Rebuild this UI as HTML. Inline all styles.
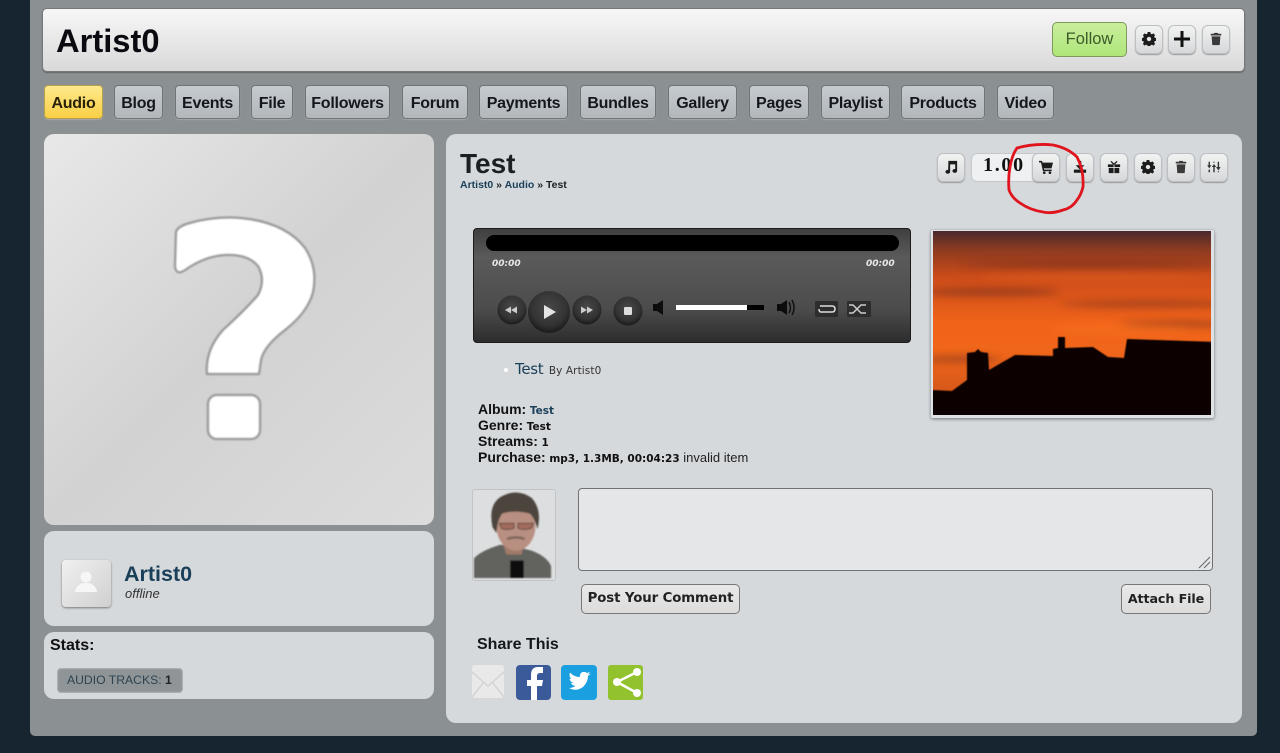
<!DOCTYPE html>
<html><head><meta charset="utf-8"><style>
*{box-sizing:border-box}
html,body{margin:0;padding:0}
body{width:1280px;height:753px;overflow:hidden;position:relative;background:#16252f;font-family:"Liberation Sans",sans-serif;color:#111}
.a{position:absolute}
.t{position:absolute;white-space:nowrap;line-height:1}
.tab{position:absolute;top:85px;height:34px;border:1px solid #6f7476;border-radius:4px;background:linear-gradient(#c6cbcf,#b2b7bb);font:bold 16px/35px "Liberation Sans",sans-serif;letter-spacing:-.25px;text-align:center;color:#14181c;box-shadow:0 1px 1px #a5a9ab}
.ib{position:absolute;width:28px;height:29px;border:1px solid #bcc0c2;border-radius:6px;background:linear-gradient(#f2f2f2,#d6d8da);box-shadow:0 1px 1px #999}
.ib svg{position:absolute;left:6px;top:6px;width:14px;height:14px;fill:#1c1c1c}
.panel{position:absolute;background:#d5d9dc;border-radius:10px}
.btn{position:absolute;border:1px solid #777;border-radius:5px;background:linear-gradient(#e9e9e9,#dcdcdc);font:bold 13.3px/28px "DejaVu Sans",sans-serif;text-align:center;color:#222;white-space:nowrap;letter-spacing:-.1px}
.lnk{color:#1a3f58}
.m{position:absolute;left:478px;height:16px;font:13px/16px "Liberation Sans",sans-serif;color:#222;white-space:nowrap}
.m b{font-size:14px;color:#111}
.m i{font:bold 10.5px/16px "DejaVu Sans",sans-serif;color:#111}
</style></head><body>
<div class="a" style="left:30px;top:0;width:1227px;height:736px;background:#8b9092;border-radius:0 0 5px 5px"></div>
<div class="a" style="left:42px;top:8px;width:1203px;height:64px;border-radius:5px;border:1px solid #74787a;background:linear-gradient(#f7f7f7,#d9d9d9);box-shadow:0 1px 1px #666"></div>
<div class="t" style="left:56px;top:23px;font:bold 32.700px/36px 'Liberation Sans',sans-serif;color:#0a0a10">Artist0</div>
<div class="a" style="left:1052px;top:22px;width:75px;height:35px;border:1px solid #7d9a5c;border-radius:5px;background:linear-gradient(#c9ee9c,#aee67a);font:16.500px/33px 'Liberation Sans',sans-serif;text-align:center;color:#3c5a2a">Follow</div>
<div class="ib" style="left:1135px;top:25px"><svg viewBox="0 0 16 16"><path fill-rule="evenodd" d="M6.500 0h3l.4 2 1.400.6 1.700-1.100 2 2-1.100 1.700.6 1.400 2 .4v3l-2 .4-.6 1.400 1.100 1.700-2 2-1.700-1.100-1.400.6-.4 2h-3l-.4-2-1.400-.6-1.700 1.100-2-2 1.100-1.700-.6-1.400-2-.4v-3l2-.4.6-1.400-1.100-1.700 2-2 1.700 1.100 1.400-.6zM8 5.500a2.500 2.500 0 1 0 0 5 2.500 2.500 0 0 0 0-5z"/></svg></div>
<div class="ib" style="left:1168px;top:25px"><svg style="left:5px;top:5px;width:16px;height:16px" viewBox="0 0 16 16"><path fill="#111" d="M6.500 0h3v6.500H16v3H9.500V16h-3V9.500H0v-3h6.500z"/></svg></div>
<div class="ib" style="left:1202px;top:25px"><svg viewBox="0 0 16 16"><path d="M6 1h4l.5 1H14v2H2V2h3.500zM3 5h10l-.8 10H3.800z" fill="#3a3a3a"/></svg></div>

<div class="tab" style="left:44px;width:59px;background:linear-gradient(#fdea8c,#f9cf45);border-color:#b79f4c;color:#2a2208">Audio</div>
<div class="tab" style="left:114px;width:49px">Blog</div>
<div class="tab" style="left:175px;width:65px">Events</div>
<div class="tab" style="left:251px;width:42px">File</div>
<div class="tab" style="left:305px;width:85px">Followers</div>
<div class="tab" style="left:402px;width:66px">Forum</div>
<div class="tab" style="left:479px;width:89px">Payments</div>
<div class="tab" style="left:580px;width:76px">Bundles</div>
<div class="tab" style="left:668px;width:69px">Gallery</div>
<div class="tab" style="left:749px;width:60px">Pages</div>
<div class="tab" style="left:821px;width:69px">Playlist</div>
<div class="tab" style="left:901px;width:84px">Products</div>
<div class="tab" style="left:997px;width:57px">Video</div>

<div class="a" style="left:44px;top:134px;width:390px;height:391px;border-radius:10px;background:linear-gradient(135deg,#e8e8e8,#d2d2d2 50%,#dcdcdc)"></div>
<svg class="a" style="left:44px;top:134px" width="390" height="391" viewBox="44 134 390 391">
<defs><filter id="q" x="-10%" y="-10%" width="120%" height="120%"><feGaussianBlur stdDeviation=".7"/></filter></defs>
<g filter="url(#q)">
<path d="M176 232Q178 226 190 223Q215 216 240 218Q285 222 305 248Q318 268 313 292Q308 312 285 330Q264 346 261 360L259 374H207Q205 350 223 330Q245 310 258 295Q266 280 258 266Q248 254 225 255Q205 256 185 270Q176 276 175 266Z" fill="#fff" stroke="#9c9c9c" stroke-width="2.500" stroke-linejoin="round"/>
<rect x="208" y="395" width="52" height="44" rx="9" fill="#fff" stroke="#9c9c9c" stroke-width="2.500"/>
</g></svg>

<div class="panel" style="left:44px;top:531px;width:390px;height:95px"></div>
<div class="a" style="left:62px;top:560px;width:49px;height:47px;border-radius:4px;background:linear-gradient(135deg,#f0f0f0,#d0d0d0);box-shadow:0 1px 2px #777"></div>
<svg class="a" style="left:62px;top:560px" width="49" height="47" viewBox="0 0 49 47"><circle cx="24" cy="17" r="5.500" fill="#f6f6f6"/><path d="M13 32Q14 25 21 23H27Q34 25 35 32Z" fill="#f6f6f6"/></svg>
<div class="t lnk" style="left:124px;top:563px;font:bold 21.500px/22px 'Liberation Sans',sans-serif">Artist0</div>
<div class="t" style="left:125px;top:587px;font:italic 13px/14px 'Liberation Sans',sans-serif;color:#333">offline</div>

<div class="panel" style="left:44px;top:632px;width:390px;height:67px"></div>
<div class="t" style="left:50px;top:637px;font:bold 16px/18px 'Liberation Sans',sans-serif">Stats:</div>
<div class="a" style="left:57px;top:668px;width:126px;height:25px;border:1px solid #a8adb0;border-radius:4px;background:#8f9597;box-shadow:inset 0 0 0 1px #999;font:12.200px/22px 'Liberation Sans',sans-serif;padding-left:9px;color:#2d4352;white-space:nowrap">AUDIO TRACKS: <b style="color:#222">1</b></div>

<div class="panel" style="left:446px;top:134px;width:796px;height:589px"></div>
<div class="t" style="left:460px;top:149px;font:bold 28px/30px 'Liberation Sans',sans-serif;color:#1a1f24">Test</div>
<div class="t" style="left:460px;top:180px;font:bold 10.500px/11px 'Liberation Sans',sans-serif;color:#1a1f24"><span class="lnk">Artist0</span> » <span class="lnk">Audio</span> » Test</div>

<div class="ib" style="left:937px;top:153px"><svg viewBox="0 0 16 16"><path d="M5 1h10v11.500a2.700 2.200 0 1 1-2.200-2.200V5H7v8.500a2.700 2.200 0 1 1-2.200-2.200z"/></svg></div>
<div class="a" style="left:971px;top:153px;width:70px;height:29px;border-radius:6px 0 0 6px;border:1px solid #c4c8ca;border-right:0;background:#eef0f1"></div>
<div class="ib" style="left:1032px;top:153px"><svg viewBox="0 0 16 16"><path d="M0 1h3.500l.5 2H16l-1.700 6.500H5.600l.3 1.500H14.500v1.700H4.500L2.300 2.800H0z"/><circle cx="6" cy="14.500" r="1.500"/><circle cx="12.500" cy="14.500" r="1.500"/></svg></div>
<div class="ib" style="left:1066px;top:153px"><svg viewBox="0 0 16 16"><path d="M6.500 1h3v5H13l-5 5-5-5h3.500zM1 11h14v3.500H1z"/></svg></div>
<div class="ib" style="left:1100px;top:153px"><svg viewBox="0 0 16 16"><path d="M1 5h6.500v3H1zM8.500 5H15v3H8.500zM2 9h5.500v6H2zM8.500 9H14v6H8.500z"/><path d="M8 5L4.500 1.500M8 5l3.500-3.500" stroke="#222" fill="none" stroke-width="1.500"/></svg></div>
<div class="ib" style="left:1134px;top:153px"><svg viewBox="0 0 16 16"><path fill-rule="evenodd" d="M6.500 0h3l.4 2 1.400.6 1.700-1.100 2 2-1.100 1.700.6 1.400 2 .4v3l-2 .4-.6 1.400 1.100 1.700-2 2-1.700-1.100-1.400.6-.4 2h-3l-.4-2-1.400-.6-1.700 1.100-2-2 1.100-1.700-.6-1.400-2-.4v-3l2-.4.6-1.400-1.100-1.700 2-2 1.700 1.100 1.400-.6zM8 5.500a2.500 2.500 0 1 0 0 5 2.500 2.500 0 0 0 0-5z"/></svg></div>
<div class="ib" style="left:1167px;top:153px"><svg viewBox="0 0 16 16"><path d="M6 1h4l.5 1H14v2H2V2h3.500zM3 5h10l-.8 10H3.800z" fill="#3a3a3a"/></svg></div>
<div class="ib" style="left:1200px;top:153px"><svg style="left:5px;top:6px;width:16px;height:14px" viewBox="0 0 16 16"><path d="M1.800 2h1.600v4H5L2.600 9.500.2 6h1.600zM1.800 11h1.600v3H1.800zM7.200 2h1.600v1H7.200zM8 4.500L10.500 8H8.800v6H7.200V8H5.500zM12.200 2h1.600v6h1.800L13 12l-2.600-4h1.800zM12.200 13h1.600v1h-1.600z" fill="#333"/></svg></div>
<div class="t" style="left:983px;top:154px;font:bold 20px/22px 'Liberation Serif',serif;color:#111;letter-spacing:1.700px">1.00</div>
<svg class="a" style="left:1005px;top:140px" width="85" height="76" viewBox="1005 140 85 76"><path d="M1017 148Q1035 143 1053 145Q1068 148 1077 157Q1084 170 1083 187Q1081 195 1077 200Q1072 208 1063 210Q1052 214 1043 212Q1030 210 1020 203Q1012 198 1009 190Q1008 178 1010 167Q1012 155 1017 148Z" fill="none" stroke="#e0141c" stroke-width="2.800"/></svg>

<div class="a" style="left:473px;top:228px;width:438px;height:115px;border-radius:4px;border:1px solid #1c1c1c;background:linear-gradient(#3f3f3f,#5a5a5a 25%,#4c4c4c 70%,#2d2d2d)"></div>
<div class="a" style="left:486px;top:235px;width:413px;height:16px;border-radius:8px;background:#000"></div>
<div class="t" style="left:492px;top:259px;font:italic bold 9px/11px 'DejaVu Sans',sans-serif;color:#e8e8e8">00:00</div>
<div class="t" style="left:866px;top:259px;font:italic bold 9px/11px 'DejaVu Sans',sans-serif;color:#e8e8e8">00:00</div>
<svg class="a" style="left:473px;top:228px" width="438" height="115" viewBox="473 228 438 115">
<defs><radialGradient id="g" cx=".5" cy=".4" r=".6"><stop offset="0" stop-color="#484848"/><stop offset=".7" stop-color="#333"/><stop offset="1" stop-color="#1a1a1a"/></radialGradient></defs>
<circle cx="512" cy="310" r="14.500" fill="url(#g)"/><circle cx="587" cy="310" r="14.500" fill="url(#g)"/><circle cx="549" cy="312" r="21" fill="url(#g)"/><circle cx="628" cy="311" r="14.500" fill="url(#g)"/>
<path d="M505 310l6-3.500v7zM511 310l6-3.500v7zM581 306.500l6 3.500-6 3.500zM587 306.500l6 3.500-6 3.500z" fill="#ccc"/><path d="M544 305l12 7-12 7z" fill="#e4e4e4"/><rect x="624" y="307" width="8" height="8" rx="1" fill="#ddd"/>
<path d="M653 304h4l6-4v15l-6-4h-4z" fill="#0c0c0c"/>
<rect x="676" y="305" width="71" height="5" fill="#fff"/><rect x="747" y="305" width="17" height="5" fill="#000"/>
<path d="M777 304h4l6-4v15l-6-4h-4z" fill="#0c0c0c"/><path d="M789 302q3 6 0 11M792 300q4 8 0 15" fill="none" stroke="#111" stroke-width="1.500"/>
<rect x="815" y="301" width="23" height="16" rx="1" fill="#2d2d2d"/><rect x="847" y="301" width="24" height="16" rx="1" fill="#2d2d2d"/>
<path d="M820 306h12q3 0 3 3t-3 3h-11q-2 0-2-3" fill="none" stroke="#ddd" stroke-width="1.500"/><path d="M849 305h4l8 8h5M849 313h4l8-8h5" fill="none" stroke="#ccc" stroke-width="1.500"/>
</svg>

<div class="a" style="left:931px;top:230px;width:283px;height:188px;border-radius:2px;background:#dfe2e4;box-shadow:0 1px 3px #6f7375"></div>
<svg class="a" style="left:930px;top:229px" width="285" height="190" viewBox="0 0 285 190">
<defs><linearGradient id="s" x1="0" y1="0" x2="0" y2="1"><stop offset="0" stop-color="#4a2a2c"/><stop offset=".1" stop-color="#8c3a20"/><stop offset=".25" stop-color="#cc4c1a"/><stop offset=".5" stop-color="#f0631a"/><stop offset=".65" stop-color="#f0661a"/><stop offset="1" stop-color="#c8501a"/></linearGradient><filter id="b" x="-20%" y="-100%" width="140%" height="300%"><feGaussianBlur stdDeviation="4"/></filter><filter id="b2"><feGaussianBlur stdDeviation=".6"/></filter><clipPath id="c"><rect x="3" y="2" width="278" height="184"/></clipPath></defs>
<rect x="3" y="2" width="278" height="184" fill="url(#s)"/>
<g clip-path="url(#c)"><g fill="#6a2a1c" opacity=".55" filter="url(#b)"><ellipse cx="160" cy="35" rx="130" ry="3"/><ellipse cx="60" cy="63" rx="70" ry="4"/><ellipse cx="220" cy="75" rx="90" ry="3"/><ellipse cx="250" cy="95" rx="60" ry="3"/><ellipse cx="30" cy="130" rx="40" ry="3"/></g>
<g fill="#ff7a20" opacity=".3" filter="url(#b)"><ellipse cx="170" cy="48" rx="120" ry="3"/><ellipse cx="190" cy="100" rx="70" ry="6"/></g>
<path filter="url(#b2)" d="M0 161L22 162 37 151V124L45 123 48 120 51 123 58 124 59 141 85 126 123 127V120L128 119V108H135V119L163 118 178 128 194 129 197 110 285 113V190H0Z" fill="#080404"/></g>
</svg>

<div class="a" style="left:504px;top:368px;width:4px;height:4px;border-radius:50%;background:#fff"></div>
<div class="t lnk" style="left:515px;top:361px;font:15px/16px 'DejaVu Sans',sans-serif;letter-spacing:-.3px">Test <span style="font-size:10.500px;color:#333;letter-spacing:.1px;margin-left:1px">By Artist0</span></div>

<div class="m" style="top:401px"><b>Album:</b> <i class="lnk" style="color:#1a3f58">Test</i></div>
<div class="m" style="top:417px"><b>Genre:</b> <i>Test</i></div>
<div class="m" style="top:433px"><b>Streams:</b> <i>1</i></div>
<div class="m" style="top:449px"><b>Purchase:</b> <i>mp3, 1.3MB, 00:04:23</i> invalid item</div>

<svg class="a" style="left:472px;top:489px;border:1px solid #c0c4c6;border-radius:3px" width="84" height="92" viewBox="0 0 84 92">
<defs><filter id="p"><feGaussianBlur stdDeviation=".8"/></filter></defs>
<rect width="84" height="92" fill="#dcdedf"/>
<g filter="url(#p)">
<path d="M1 90V70Q8 62 28 56L44 58 60 62Q76 68 80 78V90Z" fill="#62645f"/>
<path d="M30 52H52L50 66H34Z" fill="#a07a68"/>
<path d="M38 72H52V90H38Z" fill="#111"/>
<ellipse cx="44" cy="37" rx="20" ry="25" fill="#b88f80"/>
<path d="M20 38Q15 14 30 6 46 -2 60 8 71 20 66 40 63 28 58 24 42 20 30 24 25 30 24 44Z" fill="#4c443c"/>
<path d="M27 34H42V39Q34 42 29 39ZM46 34H62L60 39Q52 42 46 39Z" fill="#a06a5c" stroke="#4a3a34" stroke-width=".8"/>
<path d="M35 50Q44 47 53 50" stroke="#7a6458" stroke-width="2.500" fill="none"/>
</g>
</svg>
<div class="a" style="left:578px;top:488px;width:635px;height:83px;border:1px solid #6f7375;border-radius:4px;background:#e4e6e8"></div>
<svg class="a" style="left:1198px;top:556px" width="14" height="14"><path d="M12 1L1 12M12 6L6 12" stroke="#666" stroke-width="1"/></svg>
<div class="btn" style="left:581px;top:584px;width:159px;height:30px">Post Your Comment</div>
<div class="btn" style="left:1121px;top:584px;width:90px;height:30px;font-size:12.700px">Attach File</div>
<div class="t" style="left:477px;top:636px;font:bold 16px/18px 'Liberation Sans',sans-serif;color:#14181c">Share This</div>

<svg class="a" style="left:470px;top:664px" width="175" height="37" viewBox="470 664 175 37">
<rect x="472" y="665" width="32" height="33" rx="3" fill="#e9e9e9"/><path d="M472 672L488 686 504 672M472 697L484 682M504 697L492 682" fill="none" stroke="#d4d4d4" stroke-width="1.500"/>
<rect x="516" y="665" width="35" height="35" rx="4" fill="#3b5a9a"/><path d="M537 700V686H542L543 680H537V676Q537 673 540 673H543V667H538Q531 667 531 675V680H527V686H531V700Z" fill="#fff"/>
<rect x="561" y="665" width="36" height="35" rx="4" fill="#1a9fe0"/><path d="M569 688Q576 692 583 687 588 682 588 676L591 673.500 588 674.500 590 672 587 673Q584.500 671 581.500 672.500 579.500 674.500 580 677 574 677 570 672.500 568.500 676 571.500 679L569.500 678.500Q570 682 573.500 683H571Q572 685.500 575.500 686 572.500 688 569 688Z" fill="#fff"/>
<rect x="608" y="665" width="35" height="35" rx="3" fill="#92c22e"/><path d="M637 672L617 682 637 693" fill="none" stroke="#fff" stroke-width="2.500"/><circle cx="637" cy="672" r="4" fill="#fff"/><circle cx="617" cy="682" r="4" fill="#fff"/><circle cx="637" cy="693" r="4" fill="#fff"/>
</svg>
</body></html>
